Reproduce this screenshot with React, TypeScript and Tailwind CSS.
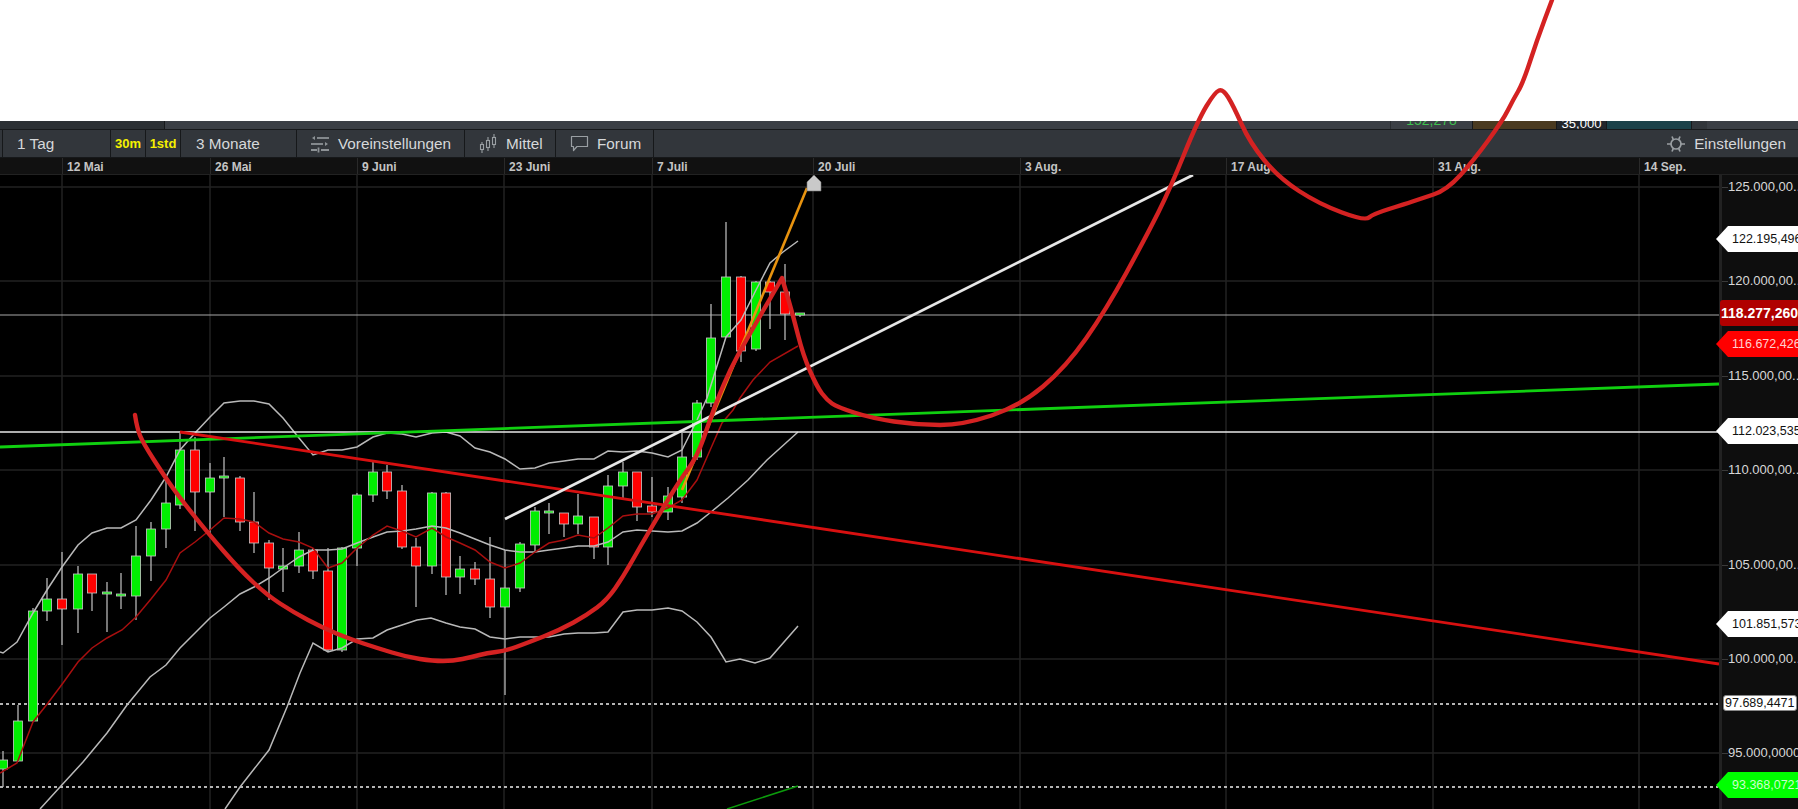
import clsx from "clsx";

type Candle = [x: number, wickTop: number, wickBottom: number, bodyTop: number, bodyBottom: number, up: boolean];
type Point = [number, number];

const candles: Candle[] = [
	[3, 751, 787, 760, 769, true],
	[18, 705, 762, 721, 761, true],
	[33, 608, 721, 611, 721, true],
	[47, 578, 621, 599, 611, true],
	[62, 552, 645, 599, 609, false],
	[78, 566, 633, 574, 609, true],
	[92, 574, 611, 574, 593, false],
	[107, 582, 632, 592, 594, true],
	[121, 573, 609, 594, 596, true],
	[136, 526, 620, 556, 596, true],
	[151, 522, 581, 529, 556, true],
	[166, 478, 548, 503, 529, true],
	[180, 433, 509, 450, 505, true],
	[195, 437, 531, 450, 492, false],
	[210, 463, 533, 478, 492, true],
	[224, 457, 517, 476, 478, true],
	[240, 476, 531, 478, 522, false],
	[254, 492, 553, 522, 543, false],
	[269, 540, 600, 543, 568, false],
	[283, 548, 592, 566, 569, true],
	[299, 532, 573, 550, 566, true],
	[313, 548, 579, 550, 571, false],
	[328, 548, 652, 571, 650, false],
	[342, 547, 652, 548, 650, true],
	[357, 493, 566, 495, 548, true],
	[373, 462, 502, 472, 495, true],
	[387, 465, 499, 472, 491, false],
	[402, 485, 549, 491, 547, false],
	[416, 538, 607, 547, 566, false],
	[432, 492, 574, 493, 566, true],
	[446, 492, 595, 493, 577, false],
	[460, 556, 594, 569, 577, true],
	[475, 562, 585, 569, 579, false],
	[490, 537, 618, 579, 607, false],
	[505, 550, 695, 588, 607, true],
	[520, 542, 592, 544, 588, true],
	[535, 507, 552, 511, 545, true],
	[549, 503, 534, 511, 513, true],
	[564, 513, 537, 513, 524, false],
	[578, 494, 534, 516, 524, true],
	[594, 517, 559, 517, 547, false],
	[608, 475, 565, 486, 547, true],
	[623, 462, 498, 472, 486, true],
	[637, 472, 521, 472, 507, false],
	[652, 477, 517, 506, 512, false],
	[668, 487, 520, 496, 512, true],
	[682, 433, 503, 457, 497, true],
	[697, 400, 460, 403, 457, true],
	[711, 304, 407, 338, 403, true],
	[726, 222, 337, 277, 337, true],
	[741, 276, 362, 277, 351, false],
	[756, 281, 351, 282, 349, true],
	[770, 281, 329, 282, 292, false],
	[785, 264, 340, 292, 314, false],
	[800, 313, 317, 313, 315, true],
];

const movingAverage: Point[] = [
	[0, 773], [17, 763], [33, 722], [48, 703], [63, 683], [78, 662], [92, 648], [107, 638], [122, 630], [136, 617],
	[151, 599], [166, 580], [180, 553], [195, 542], [210, 530], [224, 518], [240, 519], [254, 522], [269, 533],
	[283, 539], [299, 542], [313, 548], [328, 568], [342, 563], [357, 548], [373, 535], [387, 526], [402, 531],
	[416, 537], [432, 528], [446, 537], [460, 543], [475, 550], [490, 562], [505, 568], [520, 563], [535, 552],
	[549, 543], [564, 540], [578, 535], [594, 538], [608, 528], [623, 516], [637, 514], [652, 514], [668, 508],
	[682, 500], [697, 480], [711, 448], [722, 423], [733, 410], [740, 398], [753, 380], [770, 362], [798, 346],
];

const upperBand: Point[] = [
	[0, 652], [3, 653], [17, 642], [33, 613], [47, 590], [62, 567], [78, 545], [92, 533], [107, 528], [121, 528],
	[136, 520], [151, 500], [166, 477], [180, 450], [195, 433], [210, 417], [224, 403], [240, 401], [254, 401],
	[269, 404], [283, 418], [299, 438], [313, 455], [328, 450], [342, 450], [357, 447], [373, 437], [387, 433],
	[402, 434], [416, 437], [432, 433], [446, 432], [460, 436], [475, 448], [490, 452], [505, 459], [520, 469],
	[535, 468], [549, 463], [564, 461], [578, 459], [594, 459], [608, 451], [623, 452], [637, 451], [652, 453],
	[668, 457], [682, 450], [697, 420], [707, 398], [726, 337], [741, 320], [756, 290], [770, 263], [783, 252], [798, 241],
];

const middleBand: Point[] = [
	[40, 809], [60, 787], [83, 762], [107, 733], [127, 705], [150, 677], [166, 665], [180, 648], [195, 633], [210, 618],
	[224, 607], [240, 594], [254, 587], [269, 578], [283, 568], [299, 557], [313, 550], [328, 550], [342, 549],
	[357, 543], [373, 537], [387, 532], [402, 531], [416, 529], [432, 526], [446, 528], [460, 533], [475, 539],
	[490, 545], [505, 550], [520, 552], [535, 552], [549, 550], [564, 548], [578, 546], [594, 546], [608, 542],
	[623, 532], [637, 530], [652, 531], [668, 532], [682, 531], [697, 523], [711, 512], [728, 498], [748, 480],
	[767, 460], [798, 432],
];

const lowerBand: Point[] = [
	[225, 809], [240, 787], [269, 750], [287, 707], [300, 673], [313, 643], [328, 652], [342, 648], [357, 639],
	[373, 638], [387, 630], [402, 625], [417, 620], [431, 618], [446, 623], [460, 627], [475, 629], [490, 637],
	[505, 639], [520, 637], [535, 637], [549, 637], [564, 634], [578, 633], [594, 633], [608, 632], [623, 612],
	[637, 610], [652, 610], [668, 608], [682, 611], [697, 622], [711, 637], [726, 662], [740, 659], [755, 663],
	[770, 658], [798, 626],
];

// the hand drawn curve, in page coordinates because it runs over the toolbar
// the doubled point is the sharp tip at the top of the first spike
const drawnCurve: Point[] = [
	[135, 415], [137, 428], [143, 443], [165, 477], [180, 498], [207, 532], [240, 570], [267, 595], [293, 612],
	[323, 628], [350, 639], [377, 648], [407, 657], [433, 661], [453, 661], [472, 657], [487, 653], [505, 651],
	[527, 643], [560, 630], [587, 615], [607, 600], [623, 577], [640, 547], [660, 513], [680, 480], [697, 457],
	[710, 420], [718, 398], [730, 370], [745, 342], [782, 278], [782, 278], [793, 315], [803, 355], [817, 387], [827, 400], [837, 407],
	[871, 418], [917, 425], [963, 425], [1020, 406], [1066, 367], [1106, 310], [1147, 235], [1170, 189], [1198, 120],
	[1215, 92], [1223, 89], [1233, 105], [1250, 143], [1279, 178], [1319, 204], [1365, 221], [1373, 214], [1405, 204],
	[1420, 199], [1447, 190], [1474, 160], [1503, 120], [1513, 100], [1523, 83], [1537, 40], [1552, 0],
];

const gridRows = [187, 281, 376, 470, 565, 659, 753];
const gridColumns = [62, 210, 357, 504, 652, 813, 1020, 1226, 1433, 1639];

const dates = [
	{ label: "12 Mai", width: "w-[148px]" },
	{ label: "26 Mai", width: "w-[147px]" },
	{ label: "9 Juni", width: "w-[147px]" },
	{ label: "23 Juni", width: "w-[148px]" },
	{ label: "7 Juli", width: "w-[161px]" },
	{ label: "20 Juli", width: "w-[207px]" },
	{ label: "3 Aug.", width: "w-[206px]" },
	{ label: "17 Aug.", width: "w-[207px]" },
	{ label: "31 Aug.", width: "w-[206px]" },
	{ label: "14 Sep.", width: "w-[81px]" },
];

const axisLabels = [
	{ text: "125.000,00...", top: "top-[3px]" },
	{ text: "120.000,00...", top: "top-[97px]" },
	{ text: "115.000,00...", top: "top-[192px]" },
	{ text: "110.000,00...", top: "top-[286px]" },
	{ text: "105.000,00...", top: "top-[381px]" },
	{ text: "100.000,00...", top: "top-[475px]" },
	{ text: "95.000,0000", top: "top-[569px]" },
];

const arrowTags = [
	{ text: "122.195,496", top: "top-[51px]", tone: "bg-white text-[#111]" },
	{ text: "116.672,426", top: "top-[156px]", tone: "bg-[#ff0000] text-[#ffd0d0]" },
	{ text: "112.023,535", top: "top-[243px]", tone: "bg-white text-[#111]" },
	{ text: "101.851,573", top: "top-[436px]", tone: "bg-white text-[#111]" },
	{ text: "93.368,0721", top: "top-[597px]", tone: "bg-[#00ff00] text-[#ccffcc]" },
];

function smooth(points: Point[]) {
	let d = `M${points[0][0]} ${points[0][1]}`;
	for (let i = 1; i < points.length - 1; i++) {
		const [x, y] = points[i];
		const [nx, ny] = points[i + 1];
		d += ` Q${x} ${y} ${(x + nx) / 2} ${(y + ny) / 2}`;
	}
	const last = points[points.length - 1];
	return `${d} L${last[0]} ${last[1]}`;
}

function toPolyline(points: Point[]) {
	return points.map((p) => p.join(",")).join(" ");
}

function SlidersIcon() {
	return (
		<svg width="20" height="18" viewBox="0 0 20 18" fill="none" stroke="#8d9296" strokeWidth="1.8">
			<path d="M7 3h12" />
			<path d="M2 3l3-2v4z" fill="#8d9296" stroke="none" />
			<path d="M1 9h12" />
			<path d="M18 9l-3-2v4z" fill="#8d9296" stroke="none" />
			<path d="M1 15h6M11 15h8" />
			<path d="M8.5 12.5v5" />
		</svg>
	);
}

function CandleIcon() {
	return (
		<svg width="18" height="20" viewBox="0 0 18 20" fill="none" stroke="#9a9fa3" strokeWidth="1.1">
			<path d="M3 8v2M3 16v3M9 3v3M9 14v3M15 0v3M15 11v3" />
			<rect x="1.5" y="10.5" width="3" height="5" />
			<rect x="7.5" y="6.5" width="3" height="7" />
			<rect x="13.5" y="3.5" width="3" height="7" />
		</svg>
	);
}

function ForumIcon() {
	return (
		<svg width="19" height="18" viewBox="0 0 19 18" fill="none" stroke="#9a9fa3" strokeWidth="1.2">
			<path d="M1.5 1.5h16v10H7l-3.5 4v-4h-2z" strokeLinejoin="round" />
		</svg>
	);
}

function GearIcon() {
	return (
		<svg width="18" height="18" viewBox="0 0 18 18" fill="none" stroke="#9a9fa3" strokeWidth="1.7">
			<circle cx="9" cy="9" r="5" />
			<path d="M5 1.5l1.5 3.5M13 1.5l-1.5 3.5M5 16.5L6.5 13M13 16.5L11.5 13M0 9h4M14 9h4" />
		</svg>
	);
}

function ToolbarCell({ className, children }: { className: string; children: React.ReactNode }) {
	return (
		<div className={clsx("flex h-full items-center border-r border-[#16181a] bg-[#32363b]", className)}>
			{children}
		</div>
	);
}

function TopStrip() {
	return (
		<div className="flex h-[9px] border-b border-[#17191b] bg-[#3b3f45]">
			<div className="w-[165px] border-r border-[#17191b] bg-[#2c3034]" />
			<div className="w-[1226px] border-r border-[#2a2d31]" />
			<div className="flex w-[81px] items-end justify-center overflow-hidden text-[14px] leading-none text-[#3fbf4f]">
				<span className="mb-[2px]">152,278</span>
			</div>
			<div className="w-[85px] border-x border-[#17191b] bg-[#4a3a20]" />
			<div className="flex w-[49px] items-end justify-center overflow-hidden bg-[#23272c] text-[13px] leading-none text-white">
				<span className="mb-[-1px]">35,000</span>
			</div>
			<div className="w-[86px] border-x border-[#17191b] bg-[#1c424a]" />
			<div className="w-[15px] bg-[#32363b]" />
		</div>
	);
}

function Toolbar() {
	return (
		<div className="flex h-[28px] items-center border-b border-[#16181a] bg-[#32363b] text-[15.3px] text-[#d6d8da]">
			<div className="h-full w-[3px] border-r border-[#16181a]" />
			<ToolbarCell className="w-[108px] pt-[1px] pl-[14px]">1 Tag</ToolbarCell>
			<ToolbarCell className="w-[35px] justify-center pt-[1px] text-[13px] font-bold text-[#f5f000]">30m</ToolbarCell>
			<ToolbarCell className="w-[35px] justify-center pt-[1px] text-[13px] font-bold text-[#f5f000]">1std</ToolbarCell>
			<ToolbarCell className="w-[116px] pt-[1px] pl-[15px]">3 Monate</ToolbarCell>
			<ToolbarCell className="w-[168px] gap-[8px] pt-[1px] pl-[13px]">
				<SlidersIcon />
				Voreinstellungen
			</ToolbarCell>
			<ToolbarCell className="w-[91px] gap-[9px] pt-[1px] pl-[14px]">
				<CandleIcon />
				Mittel
			</ToolbarCell>
			<ToolbarCell className="w-[98px] gap-[8px] pt-[1px] pl-[14px]">
				<ForumIcon />
				Forum
			</ToolbarCell>
			<div className="ml-auto flex items-center gap-[9px] pt-[1px] pr-[12px]">
				<GearIcon />
				Einstellungen
			</div>
		</div>
	);
}

function DateBar() {
	return (
		<div className="flex h-[17px] border-b border-[#222] bg-[#111] text-[12px] leading-[18px] font-bold text-[#c4c4c4]">
			<div className="w-[62px]" />
			{dates.map((d) => (
				<div key={d.label} className={clsx("border-l border-[#2a2a2a] pl-[4px]", d.width)}>
					{d.label}
				</div>
			))}
		</div>
	);
}

function Chart() {
	return (
		<svg width="1719" height="634" viewBox="0 175 1719 634" className="block shrink-0">
			{gridRows.map((y) => (
				<line key={y} x1="0" x2="1719" y1={y} y2={y} stroke="#222" strokeWidth="1.5" />
			))}
			{gridColumns.map((x) => (
				<line key={x} x1={x} x2={x} y1="175" y2="809" stroke="#222" strokeWidth="1.5" />
			))}

			<line x1="0" x2="1719" y1="315" y2="315" stroke="#a8a8a8" strokeWidth="1" />
			<line x1="0" x2="1718" y1="704" y2="704" stroke="#f0f0f0" strokeWidth="1.5" strokeDasharray="3 3" />
			<line x1="0" x2="1718" y1="787" y2="787" stroke="#f0f0f0" strokeWidth="1.5" strokeDasharray="3 3" />

			{candles.map(([x, wickTop, wickBottom, bodyTop, bodyBottom, up]) => (
				<g key={x}>
					<line x1={x} x2={x} y1={wickTop} y2={wickBottom} stroke="#b5b5b5" strokeWidth="1.3" />
					<rect
						x={x - 4.6}
						y={bodyTop}
						width="9.2"
						height={bodyBottom - bodyTop}
						fill={up ? "#00ee00" : "#ff0000"}
						stroke="#c8c8c8"
						strokeWidth="0.8"
					/>
				</g>
			))}

			<polyline points={toPolyline(upperBand)} fill="none" stroke="#b9b9b9" strokeWidth="1.5" />
			<polyline points={toPolyline(middleBand)} fill="none" stroke="#b9b9b9" strokeWidth="1.5" />
			<polyline points={toPolyline(lowerBand)} fill="none" stroke="#b9b9b9" strokeWidth="1.5" />
			<polyline points={toPolyline(movingAverage)} fill="none" stroke="#a80f0f" strokeWidth="1.5" />

			<line x1="727" y1="809" x2="798" y2="786" stroke="#0c9a0c" strokeWidth="1.5" />
			<line x1="0" x2="1719" y1="432" y2="432" stroke="#e8e8e8" strokeWidth="1.6" />
			<line x1="0" y1="447" x2="1719" y2="384" stroke="#10d010" strokeWidth="2.8" />
			<line x1="180" y1="432" x2="1719" y2="664" stroke="#d81010" strokeWidth="2.8" />
			<line x1="505" y1="519" x2="1193" y2="175" stroke="#e6e6e6" strokeWidth="2.8" />
			<line x1="682" y1="490" x2="807" y2="188" stroke="#e8930f" strokeWidth="2.6" />
			<path d="M807 191v-9l7-7 7 7v9z" fill="#c9c9c9" stroke="#777" strokeWidth="0.6" />
		</svg>
	);
}

function PriceAxis() {
	return (
		<div className="relative h-[634px] flex-1 border-l-[3px] border-[#222] bg-[#0e0e0e] text-[13px] font-[500]">
			{axisLabels.map((l) => (
				<div key={l.text} className={clsx("absolute left-0 flex items-center leading-[18px] whitespace-nowrap text-[#d8d8d8]", l.top)}>
					<span className="h-px w-[6px] bg-[#3a3a3a]" />
					{l.text}
				</div>
			))}
			{arrowTags.map((t) => (
				<div
					key={t.text}
					className={clsx(
						"absolute left-[-6px] h-[26px] w-[82px] overflow-hidden pl-[16px] text-[12.5px] leading-[26px] whitespace-nowrap [clip-path:polygon(12px_0,100%_0,100%_100%,12px_100%,0_50%)]",
						t.top,
						t.tone,
					)}
				>
					{t.text}
				</div>
			))}
			<div className="absolute top-[125px] left-[-2px] h-[26px] w-[78px] overflow-hidden rounded-l-[3px] bg-[#b00000] pl-[1px] text-[14px] leading-[26px] font-bold whitespace-nowrap text-white">
				118.277,260
			</div>
			<div className="absolute top-[520px] left-[1px] h-[16px] rounded-[3px] border border-[#888] bg-white px-[1px] text-[12.5px] leading-[14px] whitespace-nowrap text-[#111]">
				97.689,4471
			</div>
		</div>
	);
}

export default function App() {
	return (
		<div className="relative h-[809px] w-[1798px] overflow-hidden bg-white font-['Liberation_Sans',Arial,sans-serif]">
			<div className="h-[121px]" />
			<TopStrip />
			<Toolbar />
			<DateBar />
			<div className="flex bg-black">
				<Chart />
				<PriceAxis />
			</div>
			<svg viewBox="0 0 1798 809" className="pointer-events-none absolute inset-0 h-full w-full">
				<path d={smooth(drawnCurve)} fill="none" stroke="#d42222" strokeWidth="4.4" strokeLinecap="round" strokeLinejoin="round" />
			</svg>
		</div>
	);
}
